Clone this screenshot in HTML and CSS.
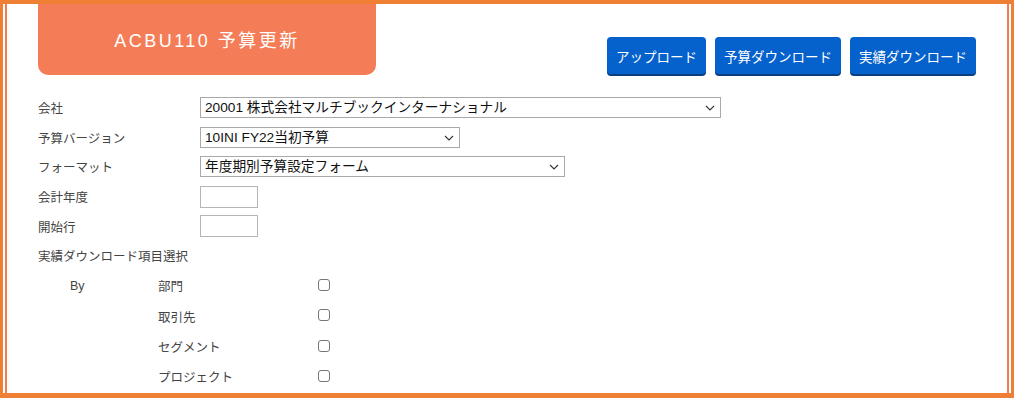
FILE: index.html
```html
<!DOCTYPE html>
<html lang="ja">
<head>
    <meta charset="UTF-8">
    <meta name="viewport" content="width=device-width, initial-scale=1.0">
    <title>ACBU110 予算更新</title>
    <link rel="stylesheet" href="styles.css">
</head>
<body>

    <div class="frame">
        <div class="inner">

            <!-- Cabecera: título y botones -->
            <div class="header">
                <div class="title-tab">ACBU110 予算更新</div>
                <div class="actions">
                    <button class="btn btn-upload">アップロード</button>
                    <button class="btn">予算ダウンロード</button>
                    <button class="btn">実績ダウンロード</button>
                </div>
            </div>

            <!-- Formulario -->
            <div class="form">
                <div class="row">
                    <label>会社</label>
                    <div class="select-wrap w-company">
                        <select><option>20001 株式会社マルチブックインターナショナル</option></select>
                        <svg class="chevron" width="10" height="6" viewBox="0 0 10 6"><path d="M1 1 L5 5 L9 1" fill="none" stroke="#333" stroke-width="1.1"/></svg>
                    </div>
                </div>
                <div class="row">
                    <label>予算バージョン</label>
                    <div class="select-wrap w-version">
                        <select><option>10INI FY22当初予算</option></select>
                        <svg class="chevron" width="10" height="6" viewBox="0 0 10 6"><path d="M1 1 L5 5 L9 1" fill="none" stroke="#333" stroke-width="1.1"/></svg>
                    </div>
                </div>
                <div class="row">
                    <label>フォーマット</label>
                    <div class="select-wrap w-format">
                        <select><option>年度期別予算設定フォーム</option></select>
                        <svg class="chevron" width="10" height="6" viewBox="0 0 10 6"><path d="M1 1 L5 5 L9 1" fill="none" stroke="#333" stroke-width="1.1"/></svg>
                    </div>
                </div>
                <div class="row">
                    <label>会計年度</label>
                    <input type="text" class="small-input">
                </div>
                <div class="row">
                    <label>開始行</label>
                    <input type="text" class="small-input">
                </div>
                <div class="row">
                    <label class="wide">実績ダウンロード項目選択</label>
                </div>

                <!-- Selección de items -->
                <div class="check-row">
                    <span class="by">By</span>
                    <span class="item">部門</span>
                    <input type="checkbox" class="check">
                </div>
                <div class="check-row">
                    <span class="by"></span>
                    <span class="item">取引先</span>
                    <input type="checkbox" class="check">
                </div>
                <div class="check-row">
                    <span class="by"></span>
                    <span class="item">セグメント</span>
                    <input type="checkbox" class="check">
                </div>
                <div class="check-row">
                    <span class="by"></span>
                    <span class="item">プロジェクト</span>
                    <input type="checkbox" class="check">
                </div>
            </div>

        </div>
    </div>

</body>
</html>
```

FILE: styles.css
```css
/* Estilos generales */
* {
    box-sizing: border-box;
}

body {
    margin: 0;
    font-family: 'Liberation Sans', 'Noto Sans CJK JP', sans-serif;
    background: #fff;
    color: #333;
}

/* Marco naranja doble */
.frame {
    width: 1014px;
    height: 398px;
    border: 3px solid #ee7f35;
    border-top-width: 4px;
    border-bottom-width: 5px;
    overflow: hidden;
}

.inner {
    height: 100%;
    margin: 0 2px;
    border-left: 2px solid #f27d52;
    border-right: 2px solid #f27d52;
    padding: 0 31px;
}

/* Cabecera */
.header {
    display: flex;
    justify-content: space-between;
    align-items: flex-start;
    height: 71px;
}

.title-tab {
    width: 338px;
    height: 71px;
    background: #f47c56;
    border-radius: 0 0 10px 10px;
    color: #fff;
    font-size: 18px;
    letter-spacing: 2.5px;
    display: flex;
    align-items: center;
    justify-content: center;
    padding-bottom: 1px;
}

.actions {
    display: flex;
    gap: 9px;
    margin-top: 33px;
}

.btn {
    height: 37px;
    padding: 0 9px;
    min-width: 126px;
    background: #0561cc;
    color: #fff;
    border: none;
    border-radius: 4px;
    box-shadow: 0 2px 0 #0b3f80;
    font-family: 'Liberation Sans', 'Noto Sans CJK JP', sans-serif;
    font-size: 13.5px;
    cursor: pointer;
}

.btn-upload {
    min-width: 98px;
}

/* Formulario */
.form {
    margin-top: 18px;
}

.row {
    display: flex;
    align-items: center;
    height: 29.6px;
}

.row label {
    width: 162px;
    font-size: 12.5px;
    color: #444;
}

.row label.wide {
    width: auto;
}

.select-wrap {
    position: relative;
    height: 21px;
}

.w-company { width: 521px; }
.w-version { width: 260px; }
.w-format { width: 365px; }

.select-wrap select {
    -webkit-appearance: none;
    appearance: none;
    width: 100%;
    height: 100%;
    border: 1px solid #a9a9a9;
    border-radius: 0;
    background: #fff;
    padding: 0 24px 0 4px;
    font-family: 'Liberation Sans', 'Noto Sans CJK JP', sans-serif;
    font-size: 13.7px;
    color: #111;
}

.chevron {
    position: absolute;
    right: 6px;
    top: 8px;
    pointer-events: none;
}

.small-input {
    width: 58px;
    height: 22px;
    border: 1px solid #b5b5b5;
    padding: 0 4px;
}

/* Filas de checkbox */
.check-row {
    display: grid;
    grid-template-columns: 32px 88px 160px 20px;
    align-items: center;
    height: 30.4px;
}

.by {
    grid-column: 2;
    font-size: 12.5px;
    color: #444;
}

.check-row .by:empty {
    visibility: hidden;
}

.item {
    font-size: 12.5px;
    color: #444;
}

.check {
    -webkit-appearance: none;
    appearance: none;
    margin: 0 0 2px;
    width: 12px;
    height: 12px;
    border: 1px solid #767676;
    border-radius: 3px;
    background: #fff;
}
```
